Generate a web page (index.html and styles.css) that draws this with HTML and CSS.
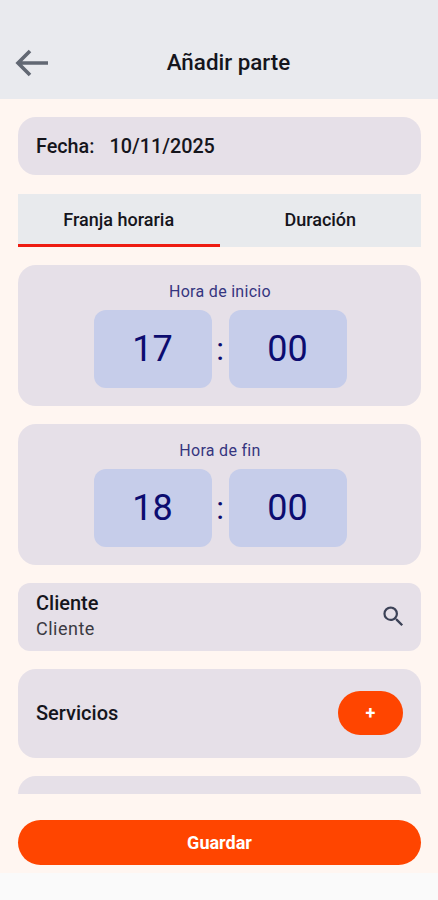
FILE: index.html
```html
<!DOCTYPE html>
<html lang="es">
<head>
  <meta charset="UTF-8">
  <meta name="viewport" content="width=device-width, initial-scale=1.0">
  <title>Añadir parte</title>
  <link rel="stylesheet" href="styles.css">
</head>
<body>
  <div class="app">
    <header class="header">
      <button class="back" aria-label="Volver">
        <svg width="34" height="28" viewBox="0 0 34 28" fill="none" stroke="#626873" stroke-width="3.6">
          <path d="M33 14H3M15 2L3 14l12 12"/>
        </svg>
      </button>
      <h1>Añadir parte</h1>
    </header>

    <main class="content">
      <div class="card date">
        <span class="date-label">Fecha:</span>
        <span class="date-value">10/11/2025</span>
      </div>

      <div class="tabs">
        <button class="tab active"><span>Franja horaria</span></button>
        <button class="tab"><span>Duración</span></button>
      </div>

      <div class="card time">
        <div class="time-label">Hora de inicio</div>
        <div class="time-picker">
          <div class="time-box">17</div>
          <div class="colon">:</div>
          <div class="time-box">00</div>
        </div>
      </div>

      <div class="card time">
        <div class="time-label">Hora de fin</div>
        <div class="time-picker">
          <div class="time-box">18</div>
          <div class="colon">:</div>
          <div class="time-box">00</div>
        </div>
      </div>

      <div class="card client">
        <div>
          <div class="client-title">Cliente</div>
          <div class="client-value">Cliente</div>
        </div>
        <svg class="search" width="27" height="27" viewBox="0 0 24 24" fill="#3c4257">
          <path d="M15.5 14h-.79l-.28-.27A6.471 6.471 0 0 0 16 9.5 6.5 6.5 0 1 0 9.5 16c1.61 0 3.09-.59 4.23-1.57l.27.28v.79l5 4.99L20.49 19l-4.99-5zm-6 0C7.01 14 5 11.99 5 9.5S7.01 5 9.5 5 14 7.01 14 9.5 11.99 14 9.5 14z"/>
        </svg>
      </div>

      <div class="card services">
        <span class="services-title">Servicios</span>
        <button class="add">+</button>
      </div>

      <div class="card next"></div>
    </main>

    <footer class="footer">
      <button class="save">Guardar</button>
    </footer>
  </div>
</body>
</html>
```
FILE: styles.css
```css
body {
  margin: 0;
  background-color: #fafafa;
  font-family: Roboto, sans-serif;
  color: #15151c;
}
button {
  border: none;
  padding: 0;
  background: none;
  color: inherit;
  font-family: inherit;
}
.app {
  height: 873px;
  display: flex;
  flex-direction: column;
  overflow: hidden;
  background-color: #fff6f1;
}
.header {
  flex: none;
  height: 99px;
  box-sizing: border-box;
  padding: 27px 15px 0;
  display: grid;
  grid-template-columns: 34px 1fr 34px;
  align-items: center;
  background-color: #e9eaee;
}
.back {
  height: 28px;
}
.back svg {
  display: block;
}
h1 {
  margin: 0;
  padding: 0 0 2px 19px;
  font-size: 22.4px;
  font-weight: 500;
  line-height: 26px;
  white-space: nowrap;
  text-align: center;
}
.content {
  height: 695px;
  flex: none;
  box-sizing: border-box;
  padding: 18px 17px 0 18px;
  display: flex;
  flex-direction: column;
  gap: 18px;
  overflow: hidden;
}
.card {
  flex: none;
  box-sizing: border-box;
  border-radius: 18px;
  background-color: #e6e0e8;
}
.date {
  height: 58px;
  margin-bottom: 1px;
  padding: 0 18px;
  display: flex;
  align-items: center;
  gap: 15px;
  font-size: 19.8px;
  font-weight: 500;
}
.tabs {
  flex: none;
  height: 53px;
  display: flex;
  background-color: #e8eaed;
}
.tab {
  flex: 1;
  box-sizing: border-box;
  border-bottom: 3px solid transparent;
  font-size: 18px;
  font-weight: 500;
}
.tab.active {
  border-bottom-color: #ee1c12;
}
.time {
  height: 141px;
  padding-top: 17px;
  color: #0c0c70;
}
.time-label {
  height: 20px;
  margin-bottom: 8px;
  padding-left: 1px;
  font-size: 16px;
  line-height: 20px;
  letter-spacing: 0.3px;
  text-align: center;
  color: #35357f;
}
.time-picker {
  display: flex;
  justify-content: center;
  padding-left: 1px;
}
.time-box {
  width: 118px;
  height: 78px;
  border-radius: 12px;
  background-color: #c6cdea;
  font-size: 36px;
  line-height: 78px;
  text-align: center;
}
.colon {
  width: 17px;
  font-size: 32px;
  line-height: 78px;
  text-align: center;
}
.client {
  height: 68px;
  padding: 0 14px 2px 18px;
  border-radius: 12px;
  display: flex;
  justify-content: space-between;
  align-items: center;
}
.client-title {
  font-size: 20px;
  font-weight: 500;
  line-height: 25px;
}
.client-value {
  font-size: 18px;
  line-height: 25px;
  letter-spacing: 0.5px;
  color: #3b3a42;
}
.search {
  display: block;
}
.services {
  height: 89px;
  padding: 0 18px 2px;
  display: flex;
  justify-content: space-between;
  align-items: center;
}
.services-title {
  font-size: 20px;
  font-weight: 500;
}
.add {
  width: 65px;
  height: 44px;
  border-radius: 22px;
  background-color: #ff4500;
  color: #fff;
  font-size: 18px;
  font-weight: 700;
}
.next {
  height: 89px;
}
.footer {
  padding: 26px 17px 0 18px;
}
.save {
  width: 100%;
  height: 45px;
  border-radius: 23px;
  background-color: #ff4500;
  color: #fff;
  font-size: 18px;
  font-weight: 700;
}
```
